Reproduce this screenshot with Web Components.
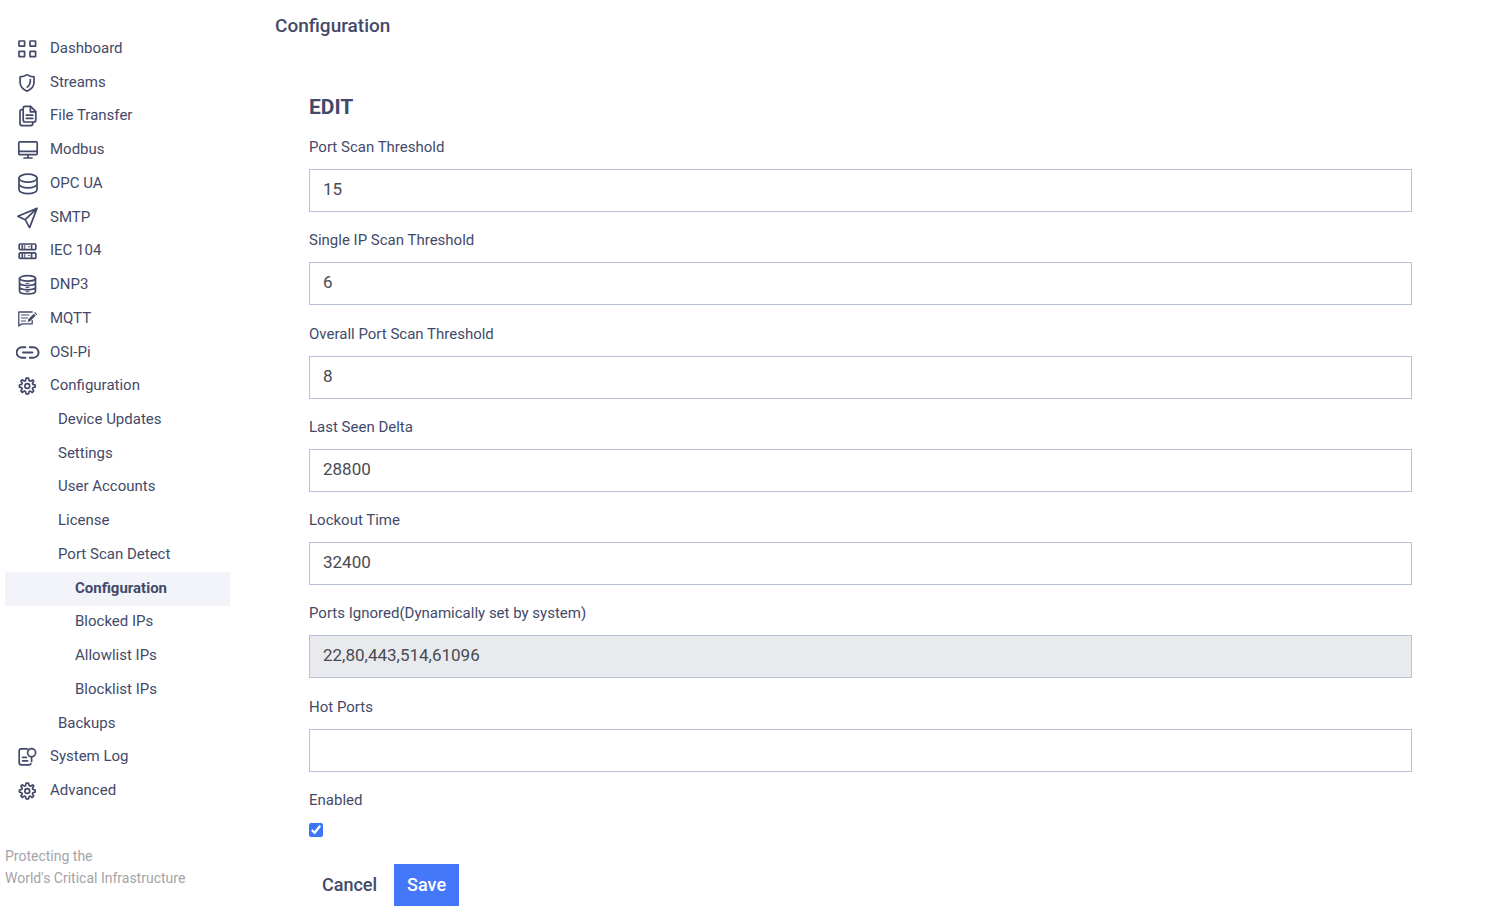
<!DOCTYPE html>
<html lang="en">
<head>
<meta charset="utf-8">
<meta name="viewport" content="width=device-width, initial-scale=1">
<title>Configuration</title>
<style>
    body {
        margin: 0;
        background: #fff;
        color: #434a69;
        font-family: Roboto, "Liberation Sans", sans-serif;
        font-size: 15px;
        line-height: 22px;
    }
</style>
</head>
<body>
<app-shell>
    <side-nav slot="nav">
        <nav-item icon="grid">Dashboard</nav-item>
        <nav-item icon="shield">Streams</nav-item>
        <nav-item icon="files">File Transfer</nav-item>
        <nav-item icon="monitor">Modbus</nav-item>
        <nav-item icon="database">OPC UA</nav-item>
        <nav-item icon="send">SMTP</nav-item>
        <nav-item icon="servers">IEC 104</nav-item>
        <nav-item icon="stack">DNP3</nav-item>
        <nav-item icon="note">MQTT</nav-item>
        <nav-item icon="link">OSI-Pi</nav-item>
        <nav-item icon="gear">Configuration</nav-item>
        <nav-item level="2">Device Updates</nav-item>
        <nav-item level="2">Settings</nav-item>
        <nav-item level="2">User Accounts</nav-item>
        <nav-item level="2">License</nav-item>
        <nav-item level="2">Port Scan Detect</nav-item>
        <nav-item level="3" active>Configuration</nav-item>
        <nav-item level="3">Blocked IPs</nav-item>
        <nav-item level="3">Allowlist IPs</nav-item>
        <nav-item level="3">Blocklist IPs</nav-item>
        <nav-item level="2">Backups</nav-item>
        <nav-item icon="log">System Log</nav-item>
        <nav-item icon="gear">Advanced</nav-item>
        <span slot="footer">Protecting the<br>World's Critical Infrastructure</span>
    </side-nav>
    <span slot="title">Configuration</span>
    <edit-form heading="EDIT">
        <form-field label="Port Scan Threshold" value="15"></form-field>
        <form-field label="Single IP Scan Threshold" value="6"></form-field>
        <form-field label="Overall Port Scan Threshold" value="8"></form-field>
        <form-field label="Last Seen Delta" value="28800"></form-field>
        <form-field label="Lockout Time" value="32400"></form-field>
        <form-field label="Ports Ignored(Dynamically set by system)" value="22,80,443,514,61096" readonly></form-field>
        <form-field label="Hot Ports" value=""></form-field>
        <check-field slot="check" label="Enabled" checked></check-field>
        <action-button slot="actions">Cancel</action-button>
        <action-button slot="actions" primary>Save</action-button>
    </edit-form>
</app-shell>

<script>
const ICONS = {
    grid: `<rect x="3" y="4" width="5.6" height="5.2" rx=".4"/><rect x="14" y="4" width="5.6" height="5.2" rx=".4"/>
        <rect x="3" y="14.4" width="5.6" height="5.2" rx=".4"/><rect x="14" y="14.4" width="5.6" height="5.2" rx=".4"/>`,
    shield: `<path d="M11 3.6 C9 5 6.6 5.7 4.1 5.8 V11.5 C4.1 15.7 7.2 18.5 11 20.2 C14.8 18.5 18 15.7 18 11.5 V5.8 C15.4 5.7 13 5 11 3.6Z"/>
        <path d="M14.3 8.6 C14.6 12 13.5 14.3 11.3 16.2"/>`,
    files: `<path d="M9.2 2.4 H14.6 L19.8 7.6 V16 Q19.8 18 17.8 18 H9.2 Q7.2 18 7.2 16 V4.4 Q7.2 2.4 9.2 2.4Z"/>
        <path d="M14.4 2.6 V7.8 H19.6 M10.3 11.2 H16.8 M10.3 14.4 H16.8"/>
        <path d="M7 5.6 H6 Q4 5.6 4 7.6 V19.6 Q4 21.6 6 21.6 H14.8 Q16.8 21.6 16.8 19.6 V18.4"/>`,
    monitor: `<rect x="2.8" y="3.8" width="18.4" height="12.8" rx="1"/><path d="M3 13.3 H21 M12 16.8 V20 M8 20 H16"/>`,
    database: `<ellipse cx="12" cy="6.2" rx="9" ry="4"/><path d="M3 6.2 V17.6 C3 20 7 21.6 12 21.6 S21 20 21 17.6 V6.2 M3 11.8 C3 14.2 7 15.8 12 15.8 S21 14.2 21 11.8"/>`,
    send: `<path d="M21 2.4 L1.8 10.3 L9.2 13.7 L13.6 21.6Z M21 2.4 L9.2 13.7"/>`,
    servers: `<rect x="3.2" y="5" width="16.6" height="5.6" rx="1"/><rect x="3.2" y="13.8" width="16.6" height="5.6" rx="1"/>
        <path d="M6.3 6.3 V9.5 M15.6 6.3 V9.5 M6.3 15 V18.2 M15.6 15 V18.2"/>
        <path d="M8.8 6 V9.8 M12.4 7.8 H13.4 M8.8 14.8 V18.6 M12.4 16.6 H13.4" stroke-width="1"/>`,
    stack: `<ellipse cx="11.5" cy="5.4" rx="8" ry="2.7"/>
        <path d="M3.5 5.4 V18 C3.5 19.8 7 21 11.5 21 S19.5 19.8 19.5 18 V5.4 M3.5 9.6 C3.5 11.4 7 12.6 11.5 12.6 S19.5 11.4 19.5 9.6 M3.5 13.8 C3.5 15.6 7 16.8 11.5 16.8 S19.5 15.6 19.5 13.8"/>
        <path d="M10 10.4 H13 M10 14.6 H13 M10 18.8 H13" stroke-width="1"/>`,
    note: `<path d="M16.2 5 H2.8 V19 L5.8 16.9 H16.2 V13.6" stroke-width="1.3"/><path d="M5.4 8 H13 M5.4 11 H11.5 M5.4 14 H9.6" stroke-width="1.1"/>
        <path d="M12 14.6 L12.7 12 L17.8 7 L19.4 8.6 L14.4 13.8Z" fill="currentColor" stroke-width=".5"/><path d="M18.9 5.7 L20.5 7.3" stroke-width="1.1"/>`,
    link: `<path d="M9.4 6.3 H5.8 A5.2 5.2 0 0 0 5.8 16.7 H9.4 M13.8 6.3 H17.4 A5.2 5.2 0 0 1 17.4 16.7 H13.8 M7 11.5 H16.4" stroke-width="1.9"/>`,
    gear: `<circle cx="11.3" cy="12" r="2.4"/>
        <path d="M10.1 4.2 H12.5 L13.2 6.7 L14.4 7.2 L16.6 5.9 L17.8 7.1 L16.4 9.2 L16.9 10.4 L19.2 11 V13.1 L16.9 13.7 L16.4 14.9 L17.7 17 L16.3 18.5 L14.2 17.1 L13.1 17.6 L12.5 19.9 H10.1 L9.5 17.6 L8.4 17.1 L6.2 18.4 L4.9 17 L6.2 14.9 L5.7 13.7 L3.4 13.1 V11 L5.7 10.4 L6.2 9.2 L4.9 7.1 L6.2 5.8 L8.3 7.1 L9.5 6.7Z"/>`,
    log: `<path d="M11.4 3.8 H5.2 Q3.2 3.8 3.2 5.8 V17.8 Q3.2 19.8 5.2 19.8 H13.2 Q14.8 19.8 14.8 18.6"/>
        <circle cx="15.6" cy="7.7" r="4"/><path d="M15.6 11.8 V16.4 M6.6 12.4 H10.4 M6.6 15.8 H11.6"/>`
};

class AppShell extends HTMLElement {
    connectedCallback() {
        this.attachShadow({ mode: 'open' });
        this.shadowRoot.innerHTML = `
            <style>
                :host {
                    display: grid;
                    grid-template-columns: 230px 1fr;
                    min-height: 100vh;
                }
                main {
                    display: flex;
                    flex-direction: column;
                    padding: 15px 93px 7px 45px;
                }
                h1 {
                    margin: 0;
                    font-size: 19px;
                    font-weight: 500;
                    line-height: 22px;
                }
            </style>
            <slot name="nav"></slot>
            <main>
                <h1><slot name="title"></slot></h1>
                <slot></slot>
            </main>
        `;
    }
}

class SideNav extends HTMLElement {
    connectedCallback() {
        this.attachShadow({ mode: 'open' });
        this.shadowRoot.innerHTML = `
            <style>
                :host {
                    display: flex;
                    flex-direction: column;
                    padding: 32px 0 24px 5px;
                }
                nav {
                    flex: 1;
                    display: grid;
                    grid-auto-rows: 1fr;
                }
                footer {
                    padding-top: 37px;
                    color: #a3a4a8;
                    font-size: 14px;
                    line-height: 22px;
                }
            </style>
            <nav><slot></slot></nav>
            <footer><slot name="footer"></slot></footer>
        `;
    }
}

class NavItem extends HTMLElement {
    connectedCallback() {
        const icon = ICONS[this.getAttribute('icon')];
        this.attachShadow({ mode: 'open' });
        this.shadowRoot.innerHTML = `
            <style>
                :host {
                    display: grid;
                }
                a {
                    display: flex;
                    align-items: center;
                    gap: 10px;
                    padding-left: 11px;
                    color: inherit;
                    text-decoration: none;
                }
                :host([level="2"]) a {
                    padding-left: 53px;
                }
                :host([level="3"]) a {
                    padding-left: 70px;
                }
                :host([active]) a {
                    background: #f3f4f9;
                    font-weight: 700;
                }
                a:hover {
                    background: #f3f4f9;
                }
                span {
                    padding-bottom: 2px;
                }
                svg {
                    width: 24px;
                    height: 24px;
                    fill: none;
                    stroke: currentColor;
                    stroke-width: 1.7;
                    stroke-linecap: round;
                    stroke-linejoin: round;
                }
            </style>
            <a href="#">
                ${icon ? `<svg viewBox="0 0 24 24" aria-hidden="true">${icon}</svg>` : ''}
                <span><slot></slot></span>
            </a>
        `;
    }
}

class EditForm extends HTMLElement {
    connectedCallback() {
        this.attachShadow({ mode: 'open' });
        this.shadowRoot.innerHTML = `
            <style>
                :host {
                    flex: 1;
                    display: flex;
                    flex-direction: column;
                    padding: 58px 0 0 34px;
                }
                h2 {
                    margin: 0 0 17px;
                    font-size: 21px;
                    font-weight: 700;
                    line-height: 24px;
                }
                form {
                    flex: 1;
                    display: flex;
                    flex-direction: column;
                }
                .fields {
                    flex: 1;
                    display: grid;
                    grid-auto-rows: 1fr;
                }
                .actions {
                    display: flex;
                    gap: 4px;
                    margin-top: 27px;
                }
            </style>
            <h2>${this.getAttribute('heading')}</h2>
            <form>
                <div class="fields"><slot></slot></div>
                <slot name="check"></slot>
                <div class="actions"><slot name="actions"></slot></div>
            </form>
        `;
    }
}

class FormField extends HTMLElement {
    connectedCallback() {
        this.attachShadow({ mode: 'open' });
        this.shadowRoot.innerHTML = `
            <style>
                :host {
                    display: flex;
                    flex-direction: column;
                    gap: 11px;
                    padding-bottom: 16px;
                }
                input {
                    box-sizing: border-box;
                    width: 100%;
                    height: 43px;
                    padding: 0 13px 3px;
                    border: 1px solid #b9c0d9;
                    border-radius: 0;
                    background: #fff;
                    color: #474b52;
                    font: inherit;
                    font-size: 17px;
                }
                input:read-only {
                    background: #e9eaee;
                }
                input:focus {
                    outline: none;
                    border-color: #4577fb;
                }
            </style>
            <label for="field">${this.getAttribute('label')}</label>
            <input id="field" type="text">
        `;
        const input = this.shadowRoot.querySelector('input');
        input.value = this.getAttribute('value');
        input.readOnly = this.hasAttribute('readonly');
    }
}

class CheckField extends HTMLElement {
    connectedCallback() {
        this.attachShadow({ mode: 'open' });
        this.shadowRoot.innerHTML = `
            <style>
                :host {
                    display: flex;
                    flex-direction: column;
                    align-items: flex-start;
                    gap: 12px;
                }
                input {
                    width: 14px;
                    height: 14px;
                    margin: 0;
                    accent-color: #3b76f6;
                }
            </style>
            <label for="check">${this.getAttribute('label')}</label>
            <input id="check" type="checkbox">
        `;
        this.shadowRoot.querySelector('input').checked = this.hasAttribute('checked');
    }
}

class ActionButton extends HTMLElement {
    connectedCallback() {
        this.attachShadow({ mode: 'open' });
        this.shadowRoot.innerHTML = `
            <style>
                :host {
                    display: block;
                }
                button {
                    height: 42px;
                    padding: 0 13px;
                    border: 0;
                    background: transparent;
                    color: inherit;
                    font: inherit;
                    font-size: 18px;
                    font-weight: 500;
                    cursor: pointer;
                }
                :host([primary]) button {
                    background: #4577fb;
                    color: #fff;
                }
            </style>
            <button type="button"><slot></slot></button>
        `;
    }
}

customElements.define('app-shell', AppShell);
customElements.define('side-nav', SideNav);
customElements.define('nav-item', NavItem);
customElements.define('edit-form', EditForm);
customElements.define('form-field', FormField);
customElements.define('check-field', CheckField);
customElements.define('action-button', ActionButton);
</script>
</body>
</html>
